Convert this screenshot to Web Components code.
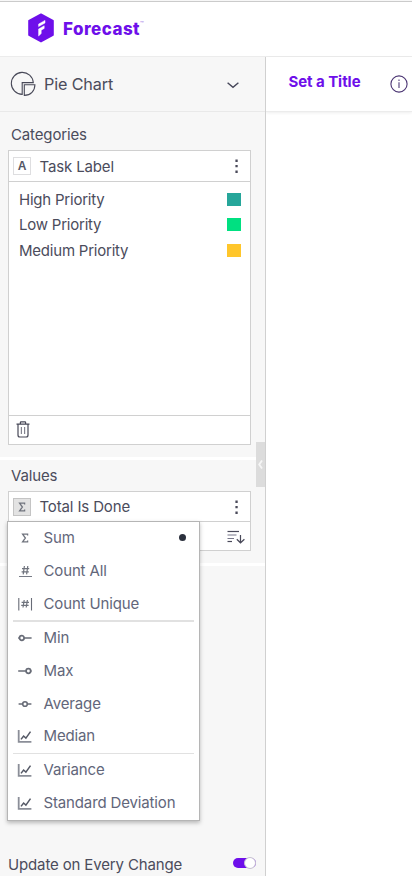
<!DOCTYPE html>
<html lang="en">
<head>
<meta charset="utf-8">
<title>Forecast</title>
<style>
html,body{margin:0;height:876px;overflow:hidden;background:#fff}
body{font:15px Inter,"Liberation Sans",sans-serif;color:#4b4c5c;letter-spacing:-.14px}
</style>
</head>
<body>
<fc-app></fc-app>
<script>
const ICONS = {
  logo: [28, 30, '<path d="M14 1.2 26 7.7V22L14 28.6 2 22V7.7Z" fill="#6e0fea" stroke="#6e0fea" stroke-width="1.6" stroke-linejoin="round"/><path d="M11.6 11.1 18 7.4V10L11.6 13.6ZM11.6 16 17.2 12.8V15.4L14.2 17.2V20.6L11.6 23Z" fill="#fff" stroke="#fff" stroke-width=".5"/>'],
  pie: [26, 26, '<g fill="none" stroke="#484958" stroke-width="1.1"><path d="M12.2 23.4A11 11 0 1 1 23.3 11.6H12.2Z"/><path d="M14.3 13.8H24.9C24.9 19.8 20.7 24.4 14.3 24.4Z"/></g>'],
  chevron: [12, 7, '<path d="M.6.8 6 5.4 11.4.8" fill="none" stroke="#46475a" stroke-width="1.4"/>'],
  info: [18, 18, '<circle cx="9" cy="9" r="8.1" fill="none" stroke="#4b3573" stroke-width="1.1"/><path d="M9 7.2V13M9 4.5V6" stroke="#8d80a8" stroke-width="1.7"/>'],
  dots: [4, 16, '<path d="M.4 1.6h2.3v2.3H.4ZM.4 6.9h2.3v2.3H.4ZM.4 12.6h2.3v2.3H.4Z" fill="#4a4a5a"/>'],
  trash: [14, 17, '<g fill="none" stroke="#484958" stroke-width="1.2"><path d="M.5 3.1H13.5M4.4 3V1.4Q4.4.8 5 .8H9Q9.6.8 9.6 1.4V3M2 3.2V14Q2 16 3.8 16H10.2Q12 16 12 14V3.2"/><path d="M5.4 6V13M8.6 6V13" stroke="#858591"/></g>'],
  sort: [18, 14, '<g fill="none" stroke="#4a4a5a"><path d="M.5 1.5H12" stroke-width="1.2"/><path d="M.5 5H9.5M.5 8.5H7" stroke="#77778a" stroke-width="1.2"/><path d="M.5 11.5H5" stroke-width="1.2"/><path d="M13.5 5V13M9.8 9.2 13.5 12.8 17.4 9.2" stroke-width="1.2"/></g>'],
  left: [5, 9, '<path d="M4 .5 1.2 4.5 4 8.5" fill="none" stroke="#f6f6f6" stroke-width="1.8"/>'],
  sigma: [16, 16, '<path d="M10.6 5.6V4.1H5.6L8.4 8 5.6 11.9H10.6V10.4" fill="none" stroke="#70747e" stroke-width="1.3"/>'],
  hash: [16, 16, '<path d="M7.4 3 6.2 11.3M10.8 3 9.6 11.3M5 5.7H12.2M4.6 8.8H11.8" fill="none" stroke="#70747e" stroke-width="1.2"/><path d="M2 13.5H15" stroke="#777b86" stroke-width="1"/>'],
  unique: [16, 16, '<path d="M7.2 4 6 11.5M10.4 4 9.2 11.5M4.6 6.3H12M4.2 9.3H11.6" fill="none" stroke="#70747e" stroke-width="1.2"/><path d="M1.8 2V14.5M14.5 2V14.5" stroke="#686c77" stroke-width="1.1"/>'],
  min: [16, 16, '<g fill="none" stroke="#686c77" stroke-width="1.7"><circle cx="4.8" cy="8" r="2.3"/><path d="M7 8H14.6M1.2 8H2.5"/></g>'],
  max: [16, 16, '<g fill="none" stroke="#686c77" stroke-width="1.7"><circle cx="11.4" cy="8" r="2.3"/><path d="M1.2 8H9.1M13.6 8H14.6"/></g>'],
  avg: [16, 16, '<g fill="none" stroke="#686c77" stroke-width="1.6"><circle cx="8" cy="8" r="2.3"/><path d="M1.6 8H5.6M10.4 8H14.4"/></g>'],
  line: [16, 16, '<path d="M1.7 2V13.8H14.4" fill="none" stroke="#8b8e98" stroke-width="1.8"/><path d="M4 11.4 6.6 8 8.9 10.1 13.5 3.6" fill="none" stroke="#555966" stroke-width="1.5"/>']
};
const define = (name, css, html) => customElements.define(name, class extends HTMLElement {
  connectedCallback() {
    if (this.shadowRoot) return;
    const root = this.attachShadow({mode: 'open'});
    root.innerHTML = `<style>*{box-sizing:border-box}:host{box-sizing:border-box}${css}</style>${typeof html === 'function' ? html(this) : html}`;
  }
});

define('fc-icon', ':host{display:block;flex:none}svg{display:block;overflow:visible}', el => {
  const [w, h, art] = ICONS[el.getAttribute('name')];
  return `<svg width="${w}" height="${h}" viewBox="0 0 ${w} ${h}">${art}</svg>`;
});

define('fc-brand', `:host{display:flex;height:57px;border-bottom:1px solid #ececec;padding:13px 0 0 27px;background:linear-gradient(#f7f7f7 1px,#cbcbcb 1px,#cbcbcb 2px,#fff 2px)}
  .word{font-weight:800;font-size:17px;line-height:20px;margin:6px 0 0 8px;color:#6e0fea;letter-spacing:.45px}.tm{font-size:6px;line-height:8px;margin-top:7px;color:#9c6ce6}`,
  '<fc-icon name="logo"></fc-icon><span class="word">Forecast</span><span class="tm">™</span>');

define('fc-type', `:host{display:flex;align-items:center;height:55px;border-bottom:1px solid #e9e9e9;padding:0 26px 0 10px}
  span{flex:1;font-size:16.2px;margin-left:8px}fc-icon[name=chevron]{margin-top:2px}`,
  '<fc-icon name="pie"></fc-icon><span><slot></slot></span><fc-icon name="chevron"></fc-icon>');

define('fc-field', `:host{display:flex;flex:none;align-items:center;height:31px;border-bottom:1px solid #d0d0d0;padding:0 11px 0 4px}
  .tag{width:18px;height:18px;display:grid;place-items:center;border:1px solid #dedee0;font:bold 12px/16px "Liberation Sans",sans-serif;color:#555766}
  :host([kind=sigma]){height:30px}:host([kind=sigma]) .tag{background:#e3e3e3;border-color:#c4c4c4}
  .name{flex:1;margin-left:8.5px}`,
  el => `<span class="tag">${el.getAttribute('kind') === 'sigma' ? '<fc-icon name="sigma"></fc-icon>' : 'A'}</span><span class="name"><slot></slot></span><fc-icon name="dots"></fc-icon>`);

define('fc-entry', ':host{display:flex;justify-content:space-between;align-items:center;height:25px;padding:0 9px 0 10px;letter-spacing:-.22px}i{width:14px;height:13px;background:var(--c)}',
  '<span><slot></slot></span><i></i>');

define('fc-section', `:host{display:block;padding:0 14px 0 8px;border-bottom:3px solid #fff}
  .title{height:var(--title-h,38px);line-height:18px;padding:var(--title-top,14px) 0 0 3px}.box{border:1px solid #d0d0d0;background:#fff;display:flex;flex-direction:column;height:var(--box-h)}`,
  el => `<div class="title">${el.getAttribute('label')}</div><div class="box"><slot></slot></div>`);

define('fc-option', `:host{display:flex;align-items:center;height:33px;padding:0 13px 2px 9px;color:#62667a}
  .label{flex:1;margin-left:10.5px}.dot{width:7px;height:7px;border-radius:50%;background:#2b303d}`,
  el => `<fc-icon name="${el.getAttribute('icon')}"></fc-icon><span class="label"><slot></slot></span>${el.hasAttribute('selected') ? '<i class="dot"></i>' : ''}`);

define('fc-menu', `:host{display:block;width:193px;height:300px;background:#fff;border:1px solid #b5b5b5;box-shadow:0 2px 4px rgba(0,0,0,.25)}`, '<slot></slot>');

define('fc-toggle', ':host{display:block;position:relative;width:23px;height:10px;border-radius:5px;background:#6e0fea}i{position:absolute;right:0;top:-1px;width:12px;height:12px;border-radius:50%;background:#fff;border:1px solid #c6c1d0}', '<i></i>');

define('fc-sidebar', `:host{display:flex;flex-direction:column;position:relative;width:266px;height:819px;background:#f7f7f7;border-right:1px solid #d0d0d0}
  .cats{--box-h:295px;height:348px}.vals{--box-h:60px;--title-h:31px;--title-top:7px;height:106px}
  .entries{flex:1;padding-top:5px}.entries :last-child{height:26px;padding-top:1px}.foot{height:29px;border-top:1px solid #d0d0d0;padding:5px 0 0 7px}
  .sortrow{display:flex;justify-content:flex-end;height:28px;padding:8px 5px 0}
  fc-menu{position:absolute;left:7px;top:464px}.handle{position:absolute;right:0;top:385px;width:9px;height:45px;background:#dcdcdc;display:grid;place-items:center}
  hr{border:0;margin:0 5px;height:1px;background:#e1e1e1}.thick{height:2px;margin-top:-1px}
  .update{margin-top:auto;height:23px;display:flex;align-items:center;justify-content:space-between;padding:0 9px 0 8px}fc-toggle{margin-top:-3px}`,
  `<fc-type>Pie Chart</fc-type>
  <fc-section class="cats" label="Categories">
    <fc-field>Task Label</fc-field>
    <div class="entries"><fc-entry style="--c:#26a69a">High Priority</fc-entry><fc-entry style="--c:#00e081">Low Priority</fc-entry><fc-entry style="--c:#ffc62b">Medium Priority</fc-entry></div>
    <div class="foot"><fc-icon name="trash"></fc-icon></div>
  </fc-section>
  <fc-section class="vals" label="Values">
    <fc-field kind="sigma">Total Is Done</fc-field>
    <div class="sortrow"><fc-icon name="sort"></fc-icon></div>
  </fc-section>
  <div class="update"><span>Update on Every Change</span><fc-toggle></fc-toggle></div>
  <div class="handle"><fc-icon name="left"></fc-icon></div>
  <fc-menu>
    <fc-option icon="sigma" selected>Sum</fc-option><fc-option icon="hash">Count All</fc-option><fc-option icon="unique">Count Unique</fc-option>
    <hr class="thick">
    <fc-option icon="min">Min</fc-option><fc-option icon="max">Max</fc-option><fc-option icon="avg">Average</fc-option><fc-option icon="line" style="height:32px;padding-bottom:3px">Median</fc-option>
    <hr>
    <fc-option icon="line">Variance</fc-option><fc-option icon="line">Standard Deviation</fc-option>
  </fc-menu>`);

define('fc-canvas', `:host{display:block;flex:1}.bar{display:flex;height:55px;border-bottom:1px solid #ececec;box-shadow:0 1px 3px rgba(0,0,0,.07);padding:0 4px 0 22.4px;justify-content:space-between}
  b{color:#6e0fea;line-height:20px;margin-top:15px;font-weight:700;letter-spacing:-.05px}fc-icon{margin-top:18px}`,
  '<div class="bar"><b>Set a Title</b><fc-icon name="info"></fc-icon></div>');

define('fc-app', ':host{display:block;width:412px;height:876px}.main{display:flex}', '<fc-brand></fc-brand><div class="main"><fc-sidebar></fc-sidebar><fc-canvas></fc-canvas></div>');
</script>
</body>
</html>
